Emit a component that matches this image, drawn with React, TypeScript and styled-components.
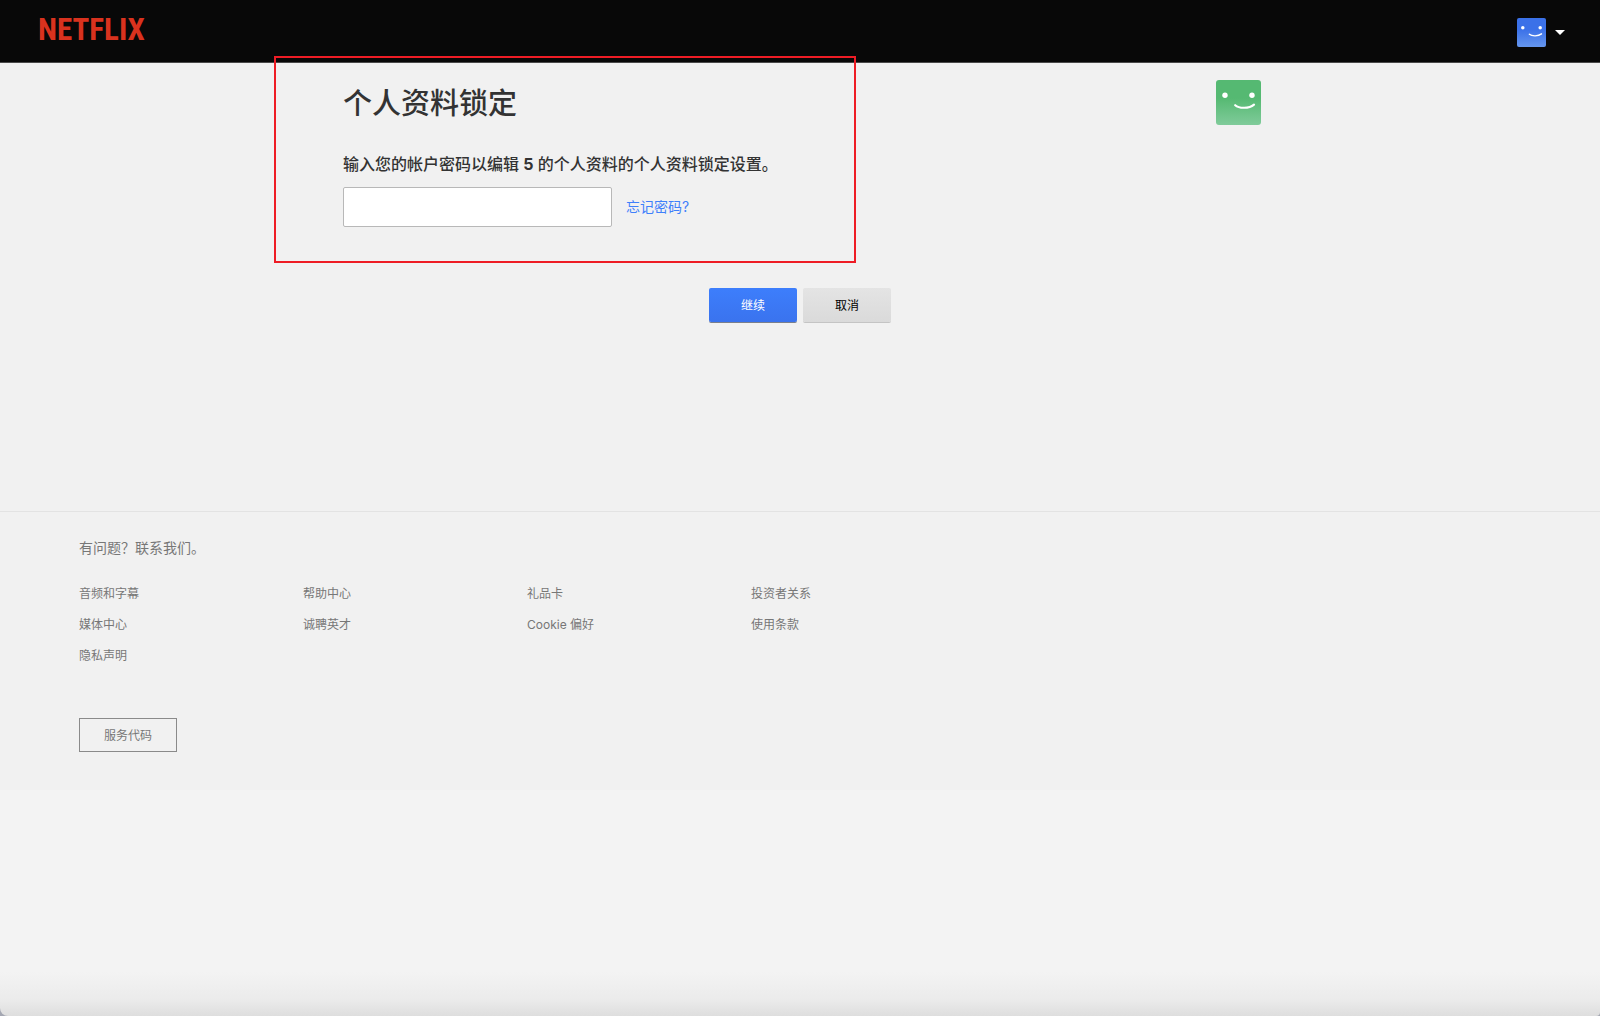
import React from 'react';
import styled, { createGlobalStyle } from 'styled-components';

const GlobalStyle = createGlobalStyle`
  *, *::before, *::after {
    box-sizing: border-box;
  }
  body {
    margin: 0;
    background: #a4a7b2;
    color: #333;
    font-family: Inter, "Noto Sans CJK SC", sans-serif;
    font-size: 14px;
  }
`;

const Page = styled.div`
  display: flex;
  flex-direction: column;
  min-height: 100vh;
  overflow: hidden;
  border-radius: 0 0 4px 8px;
  background: linear-gradient(to top, #dedede 0, #ebebeb 16px, #f3f3f3 44px);
`;

const Header = styled.header`
  display: flex;
  align-items: center;
  justify-content: space-between;
  height: 63px;
  padding: 2px 35px 0 38px;
  background: #080808;
  border-bottom: 1px solid #4a4a4a;
`;

const Logo = styled.a`
  padding-bottom: 4px;
  color: #d9321e;
  font-family: "Roboto Condensed", "Open Sans Condensed", "Noto Sans Condensed", "Liberation Sans", sans-serif;
  font-size: 31px;
  font-weight: 700;
  line-height: 32px;
  text-decoration: none;
`;

const AccountMenu = styled.button`
  display: flex;
  align-items: center;
  gap: 9px;
  padding: 0;
  border: 0;
  background: none;
  cursor: pointer;
`;

const Caret = styled.span`
  border: 5px solid transparent;
  border-top-color: #fff;
  border-bottom: 0;
`;

const Main = styled.main`
  padding-bottom: 189px;
  background: #f1f1f1;
`;

const Content = styled.div`
  max-width: 922px;
  margin: 0 auto;
`;

const LockSection = styled.section`
  position: relative;
  padding: 17px 0 0 4px;
`;

const Highlight = styled.div`
  position: absolute;
  z-index: 1;
  top: -7px;
  left: -65px;
  width: 582px;
  height: 207px;
  border: 2px solid #ee1c25;
  pointer-events: none;
`;

const TitleRow = styled.div`
  display: flex;
  align-items: flex-start;
  justify-content: space-between;
`;

const Title = styled.h1`
  margin: 0;
  font-size: 29px;
  font-weight: 500;
  line-height: 48px;
`;

const PasswordLabel = styled.label`
  display: block;
  margin-top: 24px;
  font-size: 16px;
  font-weight: 500;
  line-height: 24px;
`;

const FieldRow = styled.div`
  display: flex;
  align-items: center;
  gap: 14px;
  margin-top: 11px;
`;

const PasswordInput = styled.input`
  width: 269px;
  height: 40px;
  padding: 0 12px;
  border: 1px solid #b8b8b8;
  border-radius: 2px;
  background: #fff;
  font: inherit;
`;

const ForgotLink = styled.a`
  color: #3f80fb;
  font-size: 14px;
  line-height: 24px;
  text-decoration: none;
`;

const Actions = styled.div`
  display: flex;
  justify-content: center;
  gap: 6px;
  margin-top: 61px;
`;

const ActionButton = styled.button<{ $primary?: boolean }>`
  width: 88px;
  height: 34px;
  padding: 0 0 2px;
  border: 0;
  border-radius: 2px;
  background: ${(p) =>
    p.$primary
      ? 'linear-gradient(#3d7efc, #3a73ee)'
      : 'linear-gradient(#e4e4e4, #dadada)'};
  box-shadow: 0 1px 0 ${(p) => (p.$primary ? '#7a7f8c' : '#c4c4c4')};
  color: ${(p) => (p.$primary ? '#fff' : '#000')};
  font-family: inherit;
  font-size: 12px;
  cursor: pointer;
`;

const Footer = styled.footer`
  padding: 24px 79px 38px;
  border-top: 1px solid #e3e3e3;
  background: #f1f1f1;
  color: #777;
`;

const FooterLink = styled.a`
  color: inherit;
  text-decoration: none;
`;

const Contact = styled.p`
  margin: 0;
  font-size: 14px;
  line-height: 24px;
`;

const LinkGrid = styled.ul`
  display: grid;
  grid-template-columns: repeat(4, 1fr);
  row-gap: 11px;
  max-width: 896px;
  margin: 24px 0 52px;
  padding: 0;
  list-style: none;
  font-size: 12px;
  line-height: 20px;
`;

const ServiceButton = styled.button`
  height: 34px;
  padding: 0 24px 1px;
  border: 1px solid #8a8a8a;
  background: none;
  color: inherit;
  font-family: inherit;
  font-size: 12px;
  cursor: pointer;
`;

const footerLinks = [
  '音频和字幕',
  '帮助中心',
  '礼品卡',
  '投资者关系',
  '媒体中心',
  '诚聘英才',
  'Cookie 偏好',
  '使用条款',
  '隐私声明',
];

interface AvatarProps {
  id: string;
  size: number;
  from: string;
  to: string;
}

function Avatar({ id, size, from, to }: AvatarProps) {
  return (
    <svg width={size} height={size} viewBox="0 0 45 45" aria-hidden="true">
      <defs>
        <linearGradient id={id} x1="0" y1="0" x2="0" y2="1">
          <stop offset="0.4" stopColor={from} />
          <stop offset="1" stopColor={to} />
        </linearGradient>
      </defs>
      <rect width="45" height="45" rx="3" fill={`url(#${id})`} />
      <circle cx="9" cy="15.3" r="2.7" fill="#fff" />
      <circle cx="36" cy="15.3" r="2.7" fill="#fff" />
      <path
        d="M19.2 25.2 C23 28.6 33 28.8 38 24.6"
        fill="none"
        stroke="#fff"
        strokeWidth="2.2"
        strokeLinecap="round"
      />
    </svg>
  );
}

export default function App() {
  return (
    <>
      <GlobalStyle />
      <Page>
        <Header>
          <Logo href="#">NETFLIX</Logo>
          <AccountMenu type="button" aria-label="Account">
            <Avatar id="avatar-blue" size={29} from="#3b71e8" to="#6596ee" />
            <Caret />
          </AccountMenu>
        </Header>
        <Main>
          <Content>
            <LockSection>
              <TitleRow>
                <Title>个人资料锁定</Title>
                <Avatar id="avatar-green" size={45} from="#55b972" to="#80cb9a" />
              </TitleRow>
              <PasswordLabel htmlFor="password">
                输入您的帐户密码以编辑 <strong>5</strong> 的个人资料的个人资料锁定设置。
              </PasswordLabel>
              <FieldRow>
                <PasswordInput id="password" type="password" />
                <ForgotLink href="#">忘记密码?</ForgotLink>
              </FieldRow>
              <Highlight />
            </LockSection>
            <Actions>
              <ActionButton type="submit" $primary>
                继续
              </ActionButton>
              <ActionButton type="button">取消</ActionButton>
            </Actions>
          </Content>
        </Main>
        <Footer>
          <Contact>
            <FooterLink href="#">有问题？联系我们。</FooterLink>
          </Contact>
          <LinkGrid>
            {footerLinks.map((text) => (
              <li key={text}>
                <FooterLink href="#">{text}</FooterLink>
              </li>
            ))}
          </LinkGrid>
          <ServiceButton type="button">服务代码</ServiceButton>
        </Footer>
      </Page>
    </>
  );
}
